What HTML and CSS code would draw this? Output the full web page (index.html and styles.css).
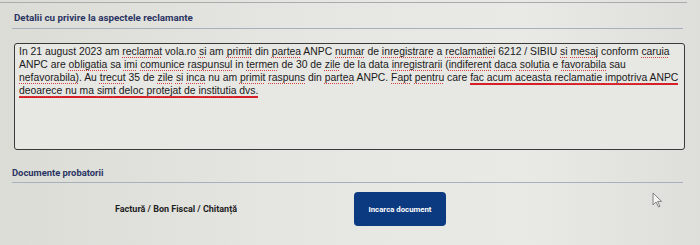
FILE: index.html
```html
<!DOCTYPE html>
<html lang="ro">
<head>
  <meta charset="UTF-8" />
  <meta name="viewport" content="width=device-width, initial-scale=1.0"/>
  <title>Detalii reclamatie</title>
  <link rel="stylesheet" href="styles.css">
</head>
<body>

  <div class="page">
    <!-- Detalii -->
    <div class="section details">
      <h3 class="section-title">Detalii cu privire la aspectele reclamante</h3>
      <div class="textbox">In 21 august 2023 am <span class="sp">reclamat</span> vola.ro <span class="sp">si</span> am <span class="sp">primit</span> din <span class="sp">partea</span> ANPC <span class="sp">numar</span> de <span class="sp">inregistrare</span> a <span class="sp">reclamatiei</span> 6212 / SIBIU <span class="sp">si</span> <span class="sp">mesaj</span> conform <span class="sp">caruia</span> ANPC are <span class="sp">obligatia</span> sa <span class="sp">imi</span> <span class="sp">comunice</span> <span class="sp">raspunsul</span> in <span class="sp">termen</span> de 30 de <span class="sp">zile</span> de la data <span class="sp">inregistrarii</span> (<span class="sp">indiferent</span> <span class="sp">daca</span> <span class="sp">solutia</span> e <span class="sp">favorabila</span> sau <span class="sp">nefavorabila)</span>. Au <span class="sp">trecut</span> 35 de <span class="sp">zile</span> <span class="sp">si</span> <span class="sp">inca</span> nu am <span class="sp">primit</span> <span class="sp">raspuns</span> din <span class="sp">partea</span> ANPC. <span class="sp">Fapt</span> <span class="sp">pentru</span> care <span class="marker">fac acum aceasta <span class="sp">reclamatie</span> <span class="sp">impotriva</span> ANPC</span> <span class="marker"><span class="sp">deoarece</span> nu ma <span class="sp">simt</span> deloc <span class="sp">protejat</span> de <span class="sp">institutia</span> dvs.</span></div>
    </div>

    <!-- Documente -->
    <div class="section documents">
      <h3 class="section-title">Documente probatorii</h3>
      <div class="doc-row">
        <div class="doc-label">Factură / Bon Fiscal / Chitanță</div>
        <div class="doc-action">
          <button class="upload-btn">Incarca document</button>
        </div>
      </div>
    </div>
  </div>

  <svg class="cursor" width="11" height="16" viewBox="0 0 11 16">
    <path d="M1 1 L1 13 L4 10 L6.5 15 L8 14.3 L5.6 9.4 L9.6 9.4 Z" fill="#f4f4f2" stroke="#777" stroke-width="0.9" stroke-linejoin="round"/>
  </svg>

</body>
</html>
```

FILE: styles.css
```css
body {
  margin: 0;
  width: 700px;
  height: 245px;
  overflow: hidden;
  background: linear-gradient(90deg, #dcdcd7 0%, #e6e6e2 45%, #e9e9e6 75%, #dededa 100%);
  font-family: "Liberation Sans", Arial, sans-serif;
  color: #1d1d1d;
  position: relative;
}

.page {
  border-top: 1px solid #a9abad;
  margin: 2px 13px 0 0;
  padding: 0 2px 0 12px;
}

.section-title {
  margin: 0 2px 0 0;
  font-family: Roboto, "Liberation Sans", sans-serif;
  font-weight: 700;
  font-size: 9.8px;
  color: #2a3462;
  padding: 0 0 5px 2px;
  border-bottom: 1px solid #a7b0bd;
}

.details .section-title {
  padding-top: 9px;
}

.textbox {
  margin: 14px 0 0 2px;
  height: 102px;
  padding: 1px 1px 2px 4px;
  border: 1.5px solid #3a3a3a;
  border-radius: 3px;
  background: #e7e7e4;
  font-size: 10.38px;
  line-height: 13px;
  color: #1a1a1a;
}

.sp {
  text-decoration: underline dotted #d84040;
  text-decoration-thickness: 1px;
  text-underline-offset: 1.5px;
  text-decoration-skip-ink: none;
}

.marker {
  border-bottom: 2px solid #d61f26;
}

.documents .section-title {
  margin-top: 17px;
  padding-left: 0;
  padding-bottom: 4px;
  font-size: 9.4px;
}

.doc-row {
  display: grid;
  grid-template-columns: 328px 1fr;
  align-items: center;
  margin-top: 9px;
}

.doc-label {
  text-align: center;
  font-family: Roboto, "Liberation Sans", sans-serif;
  font-weight: 700;
  font-size: 9px;
  color: #222;
}

.upload-btn {
  margin-left: 14px;
  width: 92px;
  height: 34px;
  border: none;
  border-radius: 4px;
  background: #0b3a80;
  color: #fff;
  font-family: Roboto, "Liberation Sans", sans-serif;
  font-weight: 700;
  font-size: 7.8px;
  cursor: pointer;
}

.cursor {
  position: absolute;
  left: 652px;
  top: 192px;
}
```
